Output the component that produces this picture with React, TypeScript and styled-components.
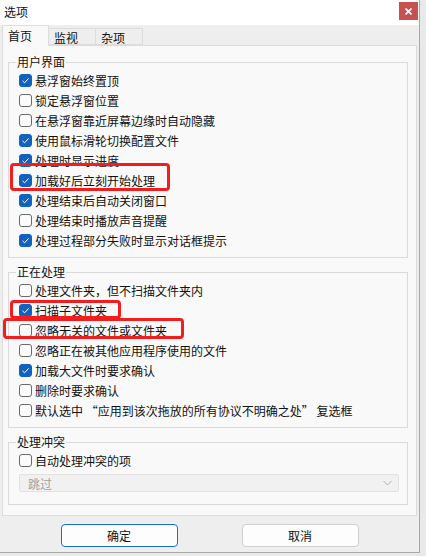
import styled, { createGlobalStyle } from 'styled-components'

const GlobalStyle = createGlobalStyle`
	body {
		margin: 0;
		background: #e9e9e9;
		font-family: "Noto Sans CJK SC", "Noto Sans", sans-serif;
		font-size: 12px;
		color: #1a1a1a;
	}
`

const Window = styled.div`
	position: relative;
	width: 419px;
	height: 552px;
	border-right: 1px solid #a9a9a9;
	border-bottom: 1px solid #a9a9a9;
	background: #eeeeee;
	display: flex;
	flex-direction: column;
`

const TitleBar = styled.div`
	height: 25px;
	background: #ffffff;
	display: flex;
	align-items: flex-start;
	justify-content: space-between;
	padding-left: 4px;
	box-sizing: border-box;
`

const Title = styled.span`
	line-height: 24px;
	font-size: 12px;
	color: #111;
`

const CloseButton = styled.div`
	width: 19px;
	height: 18px;
	margin-top: 2px;
	margin-right: 1px;
	background: #c75050;
	display: flex;
	align-items: center;
	justify-content: center;
`

const TabStrip = styled.div`
	height: 20px;
	display: flex;
	align-items: flex-end;
	padding-left: 2px;
`

const Tab = styled.div<{ $active?: boolean }>`
	box-sizing: border-box;
	width: 47px;
	height: ${({ $active }) => ($active ? '21px' : '17px')};
	margin-bottom: ${({ $active }) => ($active ? '-1px' : '0')};
	padding-left: 5px;
	line-height: ${({ $active }) => ($active ? '19px' : '17px')};
	border: 1px solid #dcdcdc;
	border-bottom: ${({ $active }) => ($active ? 'none' : '1px solid #dcdcdc')};
	border-left: ${({ $active }) => ($active ? '1px solid #dcdcdc' : 'none')};
	background: ${({ $active }) => ($active ? '#f9f9f9' : '#eeeeee')};
	position: relative;
	z-index: ${({ $active }) => ($active ? 1 : 0)};
	color: #111;
`

const Panel = styled.div`
	box-sizing: border-box;
	margin-left: 2px;
	width: 415px;
	height: 471px;
	border: 1px solid #dcdcdc;
	background: #f9f9f9;
	padding: 8px 0 0 5px;
	display: flex;
	flex-direction: column;
	gap: 6px;
`

const Group = styled.fieldset<{ $bottom?: number }>`
	margin: 0;
	min-width: 0;
	width: 400px;
	box-sizing: border-box;
	padding: 0 0 ${({ $bottom = 7 }) => $bottom}px 0;
	border: 1px solid #dadada;
`

const Legend = styled.legend`
	margin-left: 7px;
	padding: 0 1px;
	font-size: 12px;
	line-height: 16px;
	color: #111;
`

const Row = styled.div`
	height: 20px;
	display: flex;
	align-items: center;
	padding-left: 10px;
	white-space: nowrap;
	color: #111;
`

const Box = styled.span<{ $checked?: boolean }>`
	box-sizing: border-box;
	width: 13px;
	height: 13px;
	margin-right: 3px;
	border-radius: 3px;
	display: inline-flex;
	align-items: center;
	justify-content: center;
	background: ${({ $checked }) => ($checked ? '#0f62c1' : '#fbfbfb')};
	border: 1px solid ${({ $checked }) => ($checked ? '#0f62c1' : '#6a6a6a')};
`

const Select = styled.div`
	box-sizing: border-box;
	margin: 4px 0 0 10px;
	width: 380px;
	height: 18px;
	border: 1px solid #e2e2e2;
	border-radius: 2px;
	background: #f1f1f1;
	color: #a0a0a0;
	display: flex;
	align-items: center;
	justify-content: space-between;
	padding: 0 6px 0 8px;
`

const Footer = styled.div`
	flex: 1;
	display: flex;
	justify-content: center;
	gap: 64px;
	padding-top: 8px;
`

const Button = styled.div<{ $primary?: boolean }>`
	box-sizing: border-box;
	width: 117px;
	height: 23px;
	border-radius: 4px;
	background: #fdfdfd;
	border: 1px solid ${({ $primary }) => ($primary ? '#1a6fc9' : '#cfcfcf')};
	display: flex;
	align-items: center;
	justify-content: center;
	color: #111;
`

// red annotation boxes drawn over the dialog
const Highlight = styled.div<{ $x: number; $y: number; $w: number; $h: number }>`
	position: absolute;
	left: ${({ $x }) => $x}px;
	top: ${({ $y }) => $y}px;
	width: ${({ $w }) => $w}px;
	height: ${({ $h }) => $h}px;
	box-sizing: border-box;
	border: 3px solid #f41c1c;
	border-radius: 4px;
	pointer-events: none;
`

function Check({ checked, label }: { checked?: boolean; label: string }) {
	return (
		<Row>
			<Box $checked={checked}>
				{checked && (
					<svg width="9" height="9" viewBox="0 0 9 9">
						<path d="M1.5 4.8 L3.6 6.8 L7.6 2.4" stroke="#fff" strokeWidth="1" fill="none" />
					</svg>
				)}
			</Box>
			{label}
		</Row>
	)
}

const uiItems: [boolean, string][] = [
	[true, '悬浮窗始终置顶'],
	[false, '锁定悬浮窗位置'],
	[false, '在悬浮窗靠近屏幕边缘时自动隐藏'],
	[true, '使用鼠标滑轮切换配置文件'],
	[true, '处理时显示进度'],
	[true, '加载好后立刻开始处理'],
	[true, '处理结束后自动关闭窗口'],
	[false, '处理结束时播放声音提醒'],
	[true, '处理过程部分失败时显示对话框提示'],
]

const procItems: [boolean, string][] = [
	[false, '处理文件夹，但不扫描文件夹内'],
	[true, '扫描子文件夹'],
	[false, '忽略无关的文件或文件夹'],
	[false, '忽略正在被其他应用程序使用的文件'],
	[true, '加载大文件时要求确认'],
	[false, '删除时要求确认'],
	[false, '默认选中 “应用到该次拖放的所有协议不明确之处” 复选框'],
]

export default function App() {
	return (
		<>
			<GlobalStyle />
			<Window>
				<TitleBar>
					<Title>选项</Title>
					<CloseButton>
						<svg width="7" height="7" viewBox="0 0 7 7">
							<path d="M0.5 0.5 L6.5 6.5 M6.5 0.5 L0.5 6.5" stroke="#fff" strokeWidth="1.6" />
						</svg>
					</CloseButton>
				</TitleBar>
				<TabStrip>
					<Tab $active>首页</Tab>
					<Tab>监视</Tab>
					<Tab>杂项</Tab>
				</TabStrip>
				<Panel>
					<Group>
						<Legend>用户界面</Legend>
						{uiItems.map(([c, l]) => (
							<Check key={l} checked={c} label={l} />
						))}
					</Group>
					<Group>
						<Legend>正在处理</Legend>
						{procItems.map(([c, l]) => (
							<Check key={l} checked={c} label={l} />
						))}
					</Group>
					<Group $bottom={12}>
						<Legend>处理冲突</Legend>
						<Check label="自动处理冲突的项" />
						<Select>
							<span>跳过</span>
							<svg width="9" height="6" viewBox="0 0 9 6">
								<path d="M0.5 1 L4.5 5 L8.5 1" stroke="#b0b0b0" strokeWidth="1" fill="none" />
							</svg>
						</Select>
					</Group>
				</Panel>
				<Footer>
					<Button $primary>确定</Button>
					<Button>取消</Button>
				</Footer>
				<Highlight $x={10} $y={163} $w={160} $h={28} />
				<Highlight $x={10} $y={300} $w={111} $h={19} />
				<Highlight $x={3} $y={318} $w={181} $h={21} />
			</Window>
		</>
	)
}
